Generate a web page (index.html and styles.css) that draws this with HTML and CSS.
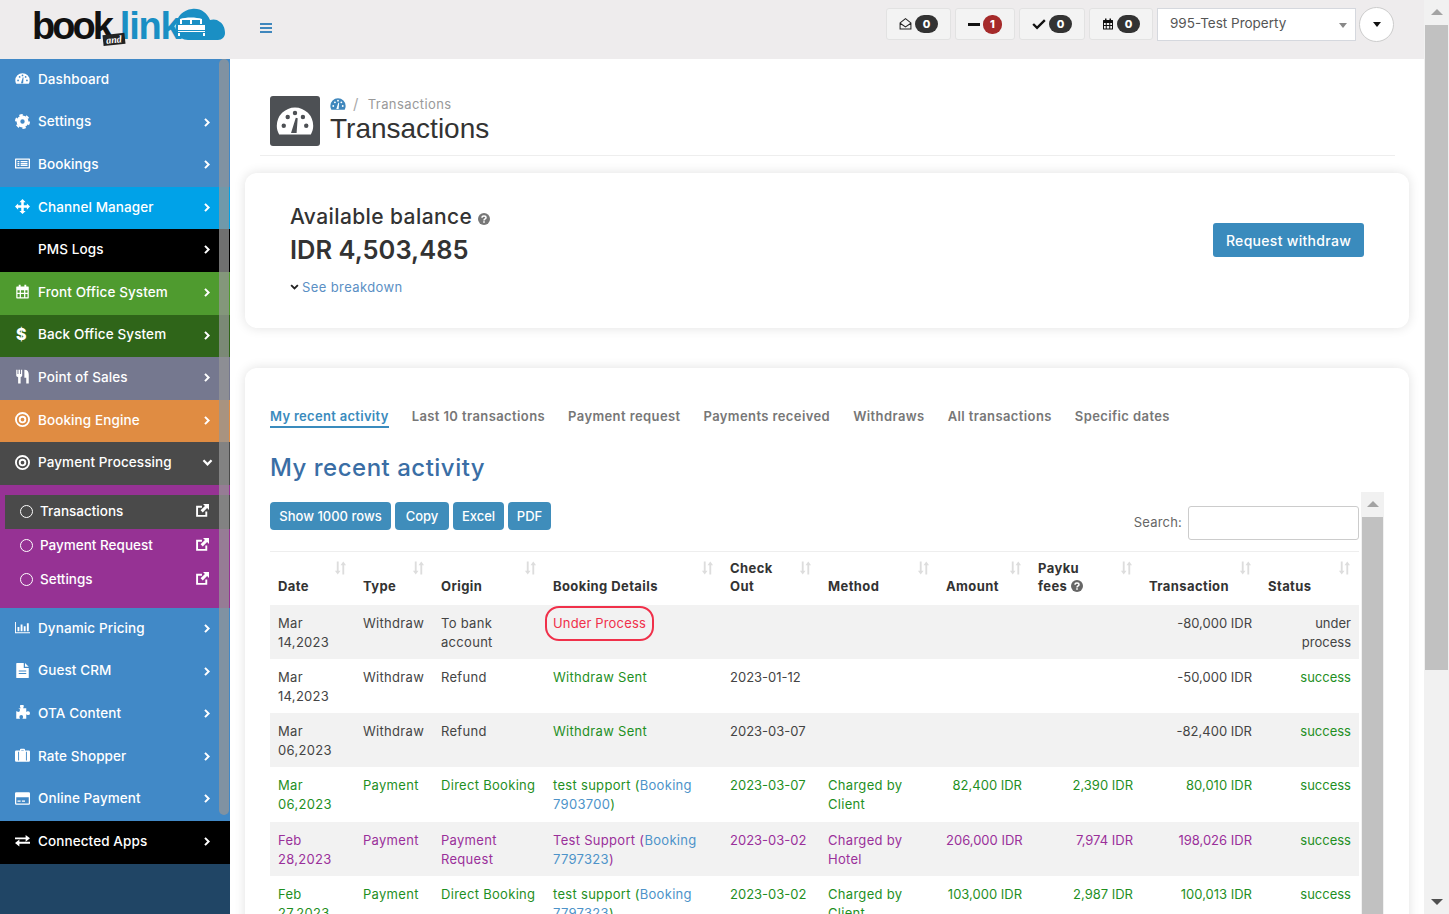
FILE: index.html
```html
<!DOCTYPE html>
<html lang="en">
<head>
  <meta charset="UTF-8">
  <meta name="viewport" content="width=device-width,initial-scale=1.0">
  <title>Transactions</title>
  <link rel="stylesheet" href="styles.css">
</head>
<body>
  <svg class="defs" width="0" height="0" aria-hidden="true">
    <symbol id="i-gauge" viewBox="0 0 24 24"><path fill="currentColor" fill-rule="evenodd" d="M12 3.5A11.5 11.5 0 0 0 .5 15c0 2 .5 3.6 1.5 5.5h20c1-1.900 1.500-3.500 1.500-5.500A11.500 11.500 0 0 0 12 3.500zM3.500 15a1.400 1.400 0 1 0 2.800 0a1.400 1.400 0 1 0-2.800 0zM6 9.500a1.400 1.400 0 1 0 2.800 0a1.400 1.400 0 1 0-2.800 0zM10.600 7a1.400 1.400 0 1 0 2.800 0a1.400 1.400 0 1 0-2.800 0zM15.600 9.500a1.400 1.400 0 1 0 2.800 0a1.400 1.400 0 1 0-2.800 0zM17.700 15a1.400 1.400 0 1 0 2.800 0a1.400 1.400 0 1 0-2.800 0zM9.500 19.500l3-9.500 1.200.3-.7 9.200z"/></symbol>
    <symbol id="i-gear" viewBox="0 0 24 24"><path fill="currentColor" fill-rule="evenodd" d="M12 2.500a9.500 9.500 0 1 0 0 19a9.500 9.500 0 1 0 0-19zM12 8.500a3.500 3.500 0 1 1 0 7a3.500 3.500 0 1 1 0-7z"/><circle cx="12" cy="12" r="10.500" fill="none" stroke="currentColor" stroke-width="3" stroke-dasharray="5.500 5.500"/></symbol>
    <symbol id="i-list" viewBox="0 0 24 24"><path fill="currentColor" fill-rule="evenodd" d="M1 4h22a1 1 0 0 1 1 1v14a1 1 0 0 1-1 1H1a1 1 0 0 1-1-1V5a1 1 0 0 1 1-1zM2 6v12h20V6zM4 8h3v2H4zM9 8h11v2H9zM4 11h3v2H4zM9 11h11v2H9zM4 14h3v2H4zM9 14h11v2H9z"/></symbol>
    <symbol id="i-move" viewBox="0 0 24 24"><path fill="currentColor" d="M12 0l5 5h-3v5h5V7l5 5-5 5v-3h-5v5h3l-5 5-5-5h3v-5H5v3l-5-5 5-5v3h5V5H7z"/></symbol>
    <symbol id="i-cal" viewBox="0 0 24 24"><path fill="currentColor" fill-rule="evenodd" d="M6 1h3v3h6V1h3v3h3a1 1 0 0 1 1 1v17a1 1 0 0 1-1 1H3a1 1 0 0 1-1-1V5a1 1 0 0 1 1-1h3zM4 10v4h3.500v-4zM9.500 10v4h5v-4zM16.500 10v4H20v-4zM4 16v5h3.500v-5zM9.500 16v5h5v-5zM16.500 16v5H20v-5z"/></symbol>
    <symbol id="i-cutlery" viewBox="0 0 24 24"><path fill="currentColor" d="M2 1h2v7h1.500V1h2.500v7h1.500V1h2v9c0 1.500-1 2.500-2.500 3v10h-4V13C3 12.500 2 11.500 2 10zM15 1c5 0 7 3 7 8v14h-4v-9h-3z"/></symbol>
    <symbol id="i-target" viewBox="0 0 24 24"><path fill="currentColor" fill-rule="evenodd" d="M12 0a12 12 0 1 0 0 24a12 12 0 1 0 0-24zM12 3a9 9 0 1 1 0 18a9 9 0 1 1 0-18zM12 6a6 6 0 1 0 0 12a6 6 0 1 0 0-12zM12 9a3 3 0 1 1 0 6a3 3 0 1 1 0-6z"/></symbol>
    <symbol id="i-bars" viewBox="0 0 24 24"><path fill="currentColor" d="M0 3h1.500v16.500H24V21H0zM4 11h3v7H4zM9 7h3v11H9zM14 10h3v8h-3zM19 5h3v13h-3z"/></symbol>
    <symbol id="i-file" viewBox="0 0 24 24"><path fill="currentColor" fill-rule="evenodd" d="M3 0h11v8h8v15a1 1 0 0 1-1 1H3a1 1 0 0 1-1-1V1a1 1 0 0 1 1-1zM16 0l6 6h-6zM6 12v1.500h12V12zM6 16v1.500h12V16z"/></symbol>
    <symbol id="i-puzzle" viewBox="0 0 24 24"><path fill="currentColor" d="M9 1a3 3 0 0 1 6 0c0 2-1 2-1 3h5v6c1 0 1.500-1 3-1a3 3 0 0 1 0 6c-1.500 0-2-1-3-1v7h-6c0-1.500 1-2 1-3a3 3 0 0 0-6 0c0 1 1 1.500 1 3H3V9c1.500 0 2 1 3 1a3 3 0 0 0 0-6H3V4h7c0-1-1-1-1-3z" transform="translate(-1 1)"/></symbol>
    <symbol id="i-case" viewBox="0 0 24 24"><path fill="currentColor" fill-rule="evenodd" d="M8 4V2.500C8 1.500 9 1 10 1h4c1 0 2 .5 2 1.500V4h6a2 2 0 0 1 2 2v14a2 2 0 0 1-2 2H2a2 2 0 0 1-2-2V6a2 2 0 0 1 2-2zM10 3v1h4V3zM5 6v14h1.500V6zM17.500 6v14H19V6z"/></symbol>
    <symbol id="i-card" viewBox="0 0 24 24"><path fill="currentColor" fill-rule="evenodd" d="M2 2h20a2 2 0 0 1 2 2v16a2 2 0 0 1-2 2H2a2 2 0 0 1-2-2V4a2 2 0 0 1 2-2zM2 10v10h20V10zM4 15h5v2H4zM11 15h5v2h-5z"/></symbol>
    <symbol id="i-swap" viewBox="0 0 24 24"><path fill="currentColor" d="M0 7h17V3l7 5.500-7 5.500v-4H0zM24 14H7v-3.500L0 16l7 5.500V17h17z"/></symbol>
    <symbol id="i-ext" viewBox="0 0 24 24"><path fill="none" stroke="currentColor" stroke-width="3.500" d="M19 14v8H2V5h9"/><path fill="currentColor" d="M13 0h11v11l-3.500-3.500-8 8-4-4 8-8z"/></symbol>
    <symbol id="i-chev" viewBox="0 0 10 12"><path fill="none" stroke="currentColor" stroke-width="2.500" d="M2.500 1.500L7 6l-4.500 4.500"/></symbol>
    <symbol id="i-down" viewBox="0 0 12 10"><path fill="none" stroke="currentColor" stroke-width="2.500" d="M1.500 2.500L6 7l4.500-4.500"/></symbol>
    <symbol id="i-help" viewBox="0 0 12 12"><circle cx="6" cy="6" r="6" fill="currentColor"/><path fill="none" stroke="#fff" stroke-width="1.500" d="M4 4.700c0-2.300 4-2.300 4 0 0 1.300-2 1.300-2 2.800"/><path fill="#fff" d="M5.200 8.300h1.600v1.500H5.200z"/></symbol>
    <symbol id="i-sort" viewBox="0 0 14 14"><path fill="currentColor" d="M3 0h2v10h2l-3 4-3-4h2zM10 0l3 4h-2v10H9V4H7z"/></symbol>
  </svg>

  <div class="app">
    <header class="topbar">
      <a class="logo">
        <span class="logo-book">book</span><span class="logo-and">and</span><span class="logo-link">link</span>
        <svg class="logo-cloud" viewBox="0 0 54 34"><path fill="#1a8fc4" d="M4 17C5 8 11 2 20 1c9-1 15 4 18 11 3-1 7-1 10 2 3 2 5 6 5 11 0 4-3 7-7 7H16C11 32 6 29 5 25 4 22 3 20 4 17z"/><path fill="#fff" d="M8 11c6-2 16-2 22 0v5H8zM6 17h27v7H6zM6 25h2v3H6zM31 25h2v3h-2z"/><path fill="#1a8fc4" d="M10 12h8v4h-8zM20 12h8v4h-8zM6 22h27v1H6z"/></svg>
      </a>
      <button class="hamburger" aria-label="Menu"><span></span><span></span><span></span></button>
      <div class="top-actions">
        <a class="top-btn b-mail"><svg class="top-icon" viewBox="0 0 18 18"><path fill="none" stroke="#222" stroke-width="1.400" d="M1.500 7.500L9 1.500l7.500 6V16h-15zM1.500 8l7.500 5 7.500-5"/></svg><b class="pill">0</b></a>
        <a class="top-btn b-minus"><span class="minus"></span><b class="pill red">1</b></a>
        <a class="top-btn b-check"><svg class="top-icon" viewBox="0 0 18 18"><path fill="none" stroke="#111" stroke-width="3" d="M1.500 9l5 5L16.500 4"/></svg><b class="pill">0</b></a>
        <a class="top-btn b-cal"><svg class="top-icon cal"><use href="#i-cal"/></svg><b class="pill">0</b></a>
        <div class="prop-select">995-Test Property<i class="caret grey"></i></div>
        <button class="round-btn" aria-label="Account"><i class="caret"></i></button>
      </div>
    </header>

    <div class="layout">
      <nav class="sidebar">
        <a class="nav-item c-blue"><svg class="nav-icon"><use href="#i-gauge"/></svg>Dashboard</a>
        <a class="nav-item c-blue"><svg class="nav-icon"><use href="#i-gear"/></svg>Settings<svg class="chev"><use href="#i-chev"/></svg></a>
        <a class="nav-item c-blue"><svg class="nav-icon"><use href="#i-list"/></svg>Bookings<svg class="chev"><use href="#i-chev"/></svg></a>
        <a class="nav-item c-sky"><svg class="nav-icon"><use href="#i-move"/></svg>Channel Manager<svg class="chev"><use href="#i-chev"/></svg></a>
        <a class="nav-item c-black"><span class="nav-icon"></span>PMS Logs<svg class="chev"><use href="#i-chev"/></svg></a>
        <a class="nav-item c-green"><svg class="nav-icon"><use href="#i-cal"/></svg>Front Office System<svg class="chev"><use href="#i-chev"/></svg></a>
        <a class="nav-item c-dgreen"><span class="nav-icon dollar">$</span>Back Office System<svg class="chev"><use href="#i-chev"/></svg></a>
        <a class="nav-item c-slate"><svg class="nav-icon"><use href="#i-cutlery"/></svg>Point of Sales<svg class="chev"><use href="#i-chev"/></svg></a>
        <a class="nav-item c-orange"><svg class="nav-icon"><use href="#i-target"/></svg>Booking Engine<svg class="chev"><use href="#i-chev"/></svg></a>
        <a class="nav-item c-dark"><svg class="nav-icon"><use href="#i-target"/></svg>Payment Processing<svg class="chev down"><use href="#i-down"/></svg></a>
        <div class="submenu">
          <a class="sub-item active"><i class="ring"></i>Transactions<svg class="ext"><use href="#i-ext"/></svg></a>
          <a class="sub-item"><i class="ring"></i>Payment Request<svg class="ext"><use href="#i-ext"/></svg></a>
          <a class="sub-item"><i class="ring"></i>Settings<svg class="ext"><use href="#i-ext"/></svg></a>
        </div>
        <a class="nav-item c-blue"><svg class="nav-icon"><use href="#i-bars"/></svg>Dynamic Pricing<svg class="chev"><use href="#i-chev"/></svg></a>
        <a class="nav-item c-blue"><svg class="nav-icon"><use href="#i-file"/></svg>Guest CRM<svg class="chev"><use href="#i-chev"/></svg></a>
        <a class="nav-item c-blue"><svg class="nav-icon"><use href="#i-puzzle"/></svg>OTA Content<svg class="chev"><use href="#i-chev"/></svg></a>
        <a class="nav-item c-blue"><svg class="nav-icon"><use href="#i-case"/></svg>Rate Shopper<svg class="chev"><use href="#i-chev"/></svg></a>
        <a class="nav-item c-blue"><svg class="nav-icon"><use href="#i-card"/></svg>Online Payment<svg class="chev"><use href="#i-chev"/></svg></a>
        <a class="nav-item c-black"><svg class="nav-icon"><use href="#i-swap"/></svg>Connected Apps<svg class="chev"><use href="#i-chev"/></svg></a>
        <div class="side-thumb"></div>
      </nav>

      <main class="content">
        <div class="page-head">
          <div class="head-icon"><svg><use href="#i-gauge"/></svg></div>
          <div>
            <div class="crumbs"><svg class="crumb-icon"><use href="#i-gauge"/></svg><span class="crumb-sep">/</span><span>Transactions</span></div>
            <h1>Transactions</h1>
          </div>
        </div>

        <section class="card balance">
          <div>
            <div class="bal-label">Available balance <svg class="help"><use href="#i-help"/></svg></div>
            <div class="bal-amount">IDR 4,503,485</div>
            <a class="bal-more"><svg class="more-icon"><use href="#i-down"/></svg>See breakdown</a>
          </div>
          <button class="btn-withdraw">Request withdraw</button>
        </section>

        <section class="card activity">
          <div class="tabs">
            <a class="tab active">My recent activity</a>
            <a class="tab">Last 10 transactions</a>
            <a class="tab">Payment request</a>
            <a class="tab">Payments received</a>
            <a class="tab">Withdraws</a>
            <a class="tab">All transactions</a>
            <a class="tab">Specific dates</a>
          </div>
          <h2>My recent activity</h2>

          <div class="dt-wrap">
            <div class="dt-main">
              <div class="dt-tools">
                <div class="dt-btns">
                  <button>Show 1000 rows</button>
                  <button>Copy</button>
                  <button>Excel</button>
                  <button>PDF</button>
                </div>
                <label class="dt-search">Search: <input type="text"></label>
              </div>
              <table class="dt">
                <colgroup>
                  <col class="w-date"><col class="w-type"><col class="w-origin"><col class="w-details"><col class="w-check">
                  <col class="w-method"><col class="w-amount"><col class="w-fees"><col class="w-trans"><col class="w-status">
                </colgroup>
                <thead>
                  <tr>
                    <th>Date<svg class="sort"><use href="#i-sort"/></svg></th>
                    <th>Type<svg class="sort"><use href="#i-sort"/></svg></th>
                    <th>Origin<svg class="sort"><use href="#i-sort"/></svg></th>
                    <th>Booking Details<svg class="sort"><use href="#i-sort"/></svg></th>
                    <th>Check<br>Out<svg class="sort"><use href="#i-sort"/></svg></th>
                    <th>Method<svg class="sort"><use href="#i-sort"/></svg></th>
                    <th>Amount<svg class="sort"><use href="#i-sort"/></svg></th>
                    <th>Payku<br>fees <svg class="help small"><use href="#i-help"/></svg><svg class="sort"><use href="#i-sort"/></svg></th>
                    <th>Transaction<svg class="sort"><use href="#i-sort"/></svg></th>
                    <th>Status<svg class="sort"><use href="#i-sort"/></svg></th>
                  </tr>
                </thead>
                <tbody>
                  <tr class="plain">
                    <td>Mar 14,2023</td><td>Withdraw</td><td>To bank account</td>
                    <td><span class="flagged">Under Process</span></td><td></td><td></td><td></td><td></td>
                    <td class="num">-80,000 IDR</td><td class="num wrap">under process</td>
                  </tr>
                  <tr class="plain">
                    <td>Mar 14,2023</td><td>Withdraw</td><td>Refund</td>
                    <td class="t-green">Withdraw Sent</td><td>2023-01-12</td><td></td><td></td><td></td>
                    <td class="num">-50,000 IDR</td><td class="num t-green">success</td>
                  </tr>
                  <tr class="plain">
                    <td>Mar 06,2023</td><td>Withdraw</td><td>Refund</td>
                    <td class="t-green">Withdraw Sent</td><td>2023-03-07</td><td></td><td></td><td></td>
                    <td class="num">-82,400 IDR</td><td class="num t-green">success</td>
                  </tr>
                  <tr class="t-green">
                    <td>Mar 06,2023</td><td>Payment</td><td>Direct Booking</td>
                    <td>test support (<a>Booking 7903700</a>)</td><td>2023-03-07</td><td>Charged by Client</td>
                    <td class="num">82,400 IDR</td><td class="num">2,390 IDR</td><td class="num">80,010 IDR</td><td class="num">success</td>
                  </tr>
                  <tr class="t-purple">
                    <td>Feb 28,2023</td><td>Payment</td><td>Payment Request</td>
                    <td>Test Support (<a>Booking 7797323</a>)</td><td>2023-03-02</td><td>Charged by Hotel</td>
                    <td class="num">206,000 IDR</td><td class="num">7,974 IDR</td><td class="num">198,026 IDR</td><td class="num t-green">success</td>
                  </tr>
                  <tr class="t-green">
                    <td>Feb 27,2023</td><td>Payment</td><td>Direct Booking</td>
                    <td>test support (<a>Booking 7797323</a>)</td><td>2023-03-02</td><td>Charged by Client</td>
                    <td class="num">103,000 IDR</td><td class="num">2,987 IDR</td><td class="num">100,013 IDR</td><td class="num">success</td>
                  </tr>
                </tbody>
              </table>
            </div>
            <div class="vscroll inner"><i class="arrow-up"></i><div class="vthumb"></div></div>
          </div>
        </section>
      </main>
    </div>
  </div>

  <div class="vscroll page"><i class="arrow-up"></i><div class="vthumb"></div><i class="arrow-down"></i></div>
</body>
</html>
```

FILE: styles.css
```css
* { box-sizing:border-box; }
html, body { height:100%; }
body { margin:0; display:flex; height:914px; overflow:hidden; background:#fff; color:#444;
       font-family:Inter,"Noto Sans",Arial,sans-serif; font-size:13px; }
.defs { position:absolute; }
a { color:inherit; text-decoration:none; }
button { font-family:inherit; cursor:pointer; }

.app { flex:1; min-width:0; display:flex; flex-direction:column; }

/* top bar */
.topbar { height:59px; flex:none; display:flex; align-items:flex-start; background:#eeeced; padding-right:30px; }
.logo { width:230px; height:59px; position:relative; display:block; padding:4px 0 0 32px; white-space:nowrap;
        font-family:"Liberation Sans",Arial,sans-serif; font-size:38px; line-height:44px; letter-spacing:-3px; }
.logo-book { color:#111; font-weight:bold; }
.logo-link { color:#1a8fc4; margin-left:9px; font-weight:bold; letter-spacing:-1.200px; }
.logo-and { position:absolute; left:103px; top:34px; background:#222; color:#fff; font:italic bold 10px/11px "Liberation Serif",serif;
            letter-spacing:0; padding:0 3px; transform:rotate(-6deg); z-index:1; }
.logo-cloud { position:absolute; left:172px; top:8px; width:54px; height:34px; }
.hamburger { margin:23px 0 0 30px; width:12px; padding:0; border:none; background:none; display:flex; flex-direction:column; gap:2px; }
.hamburger span { height:2px; background:#3f87bd; }
.top-actions { margin-left:auto; margin-top:8px; display:flex; gap:4px; }
.top-btn { height:32px; display:flex; align-items:center; justify-content:center; gap:3px; padding:0 12px;
           background:#f3f3f3; border:1px solid #e2e2e2; border-radius:3px; }
.top-icon { width:16px; height:16px; }
.top-icon.cal { color:#111; width:14px; height:14px; }
.b-mail { width:65px; }
.b-minus { width:60px; }
.b-check { width:66px; }
.b-cal { width:64px; }
.minus { width:13px; height:3px; background:#111; }
.pill { min-width:23px; height:18px; border-radius:9px; background:#333; color:#fff; font-size:11px; font-weight:800; line-height:18px; text-align:center; }
.pill.red { min-width:19px; height:19px; line-height:19px; background:#a52a2a; }
.prop-select { width:199px; height:33px; margin-right:-1px; background:#fff; border:1px solid #d5d8de; padding-left:12px; line-height:29px; color:#555;
               font-size:13.5px; position:relative; }
.caret { display:inline-block; width:0; height:0; border:4.500px solid transparent; border-top:5px solid #111; border-bottom:0; }
.caret.grey { position:absolute; right:8px; top:14px; border-top-color:#888; }
.round-btn { width:35px; height:35px; margin-top:-1px; border-radius:50%; background:#fff; border:1px solid #ccc; padding:0;
             display:flex; align-items:center; justify-content:center; }

/* sidebar */
.layout { flex:1; min-height:0; display:flex; }
.sidebar { width:230px; flex:none; position:relative; background:#204565; color:#fff; font-size:13.500px; font-weight:500; }
.nav-item { height:42.600px; display:flex; align-items:center; padding:0 20px 3px 15px; position:relative; letter-spacing:.1px; }
.nav-icon { width:15px; height:15px; margin-right:8px; flex:none; color:#fff; }
.dollar { font-weight:800; font-size:16px; line-height:15px; padding-left:1px; }
.chev { position:absolute; left:203px; top:15px; width:8px; height:11px; }
.chev.down { left:202px; top:16px; width:11px; height:9px; }
.c-blue { background:#4189c7; }
.c-sky { background:#00a2e8; }
.c-black { background:#000; }
.c-green { background:#4f9b2f; }
.c-dgreen { background:#2f6519; }
.c-slate { background:#75788f; }
.c-orange { background:#e08c42; }
.c-dark { background:#4a4a4a; }
.submenu { background:#963294; padding:10px 0 11px 5px; }
.sub-item { height:34px; display:flex; align-items:center; padding:0 0 1px 15px; position:relative; }
.sub-item.active { background:#4a4a4a; }
.ring { width:13px; height:13px; margin-right:7px; border:1.500px solid #fff; border-radius:50%; flex:none; }
.ext { position:absolute; left:191px; top:9px; width:13px; height:13px; }
.side-thumb { position:absolute; left:219px; top:0; width:10px; height:756px; border-radius:5px; background:rgba(150,150,150,.75); }

/* main */
.content { flex:1; min-width:0; overflow:hidden; background:#fff; }
.page-head { margin:0 29px 17px 30px; padding:37px 10px 9px; display:flex; gap:10px; border-bottom:1px solid #eee; }
.head-icon { width:50px; height:50px; background:#4d5054; border-radius:3px; color:#fff; display:flex; align-items:center; justify-content:center; }
.head-icon svg { width:38px; height:38px; }
.crumbs { display:flex; align-items:center; color:#999; line-height:16px; letter-spacing:.4px; margin-bottom:1px; }
.crumb-icon { width:16px; height:16px; color:#3f87bd; }
.crumb-sep { margin:0 9px 0 7px; color:#aaa; font-size:15px; }
h1 { margin:0; font-family:"Liberation Sans",Arial,sans-serif; font-size:28px; font-weight:400; line-height:31px; color:#333; }

.card { margin:0 15px; background:#fff; border-radius:12px; box-shadow:0 0 12px rgba(0,0,0,.12); }
.balance { height:155px; display:flex; justify-content:space-between; padding:32px 45px 0; }
.bal-label { font-size:21px; line-height:24px; letter-spacing:.4px; color:#333; font-weight:500; }
.help { width:12px; height:12px; color:#777; vertical-align:-1px; }
.help.small { color:#666; }
.bal-amount { font-size:25.500px; line-height:34px; margin-top:4px; font-weight:600; color:#333; }
.bal-more { display:flex; align-items:center; margin-top:11px; line-height:18px; letter-spacing:.4px; color:#5b8fc4; }
.more-icon { width:9px; height:8px; margin-right:3px; color:#222; }
.btn-withdraw { align-self:flex-start; margin-top:18px; width:151px; height:34px; border:none; border-radius:3px; background:#3a8bbd;
                color:#fff; font-size:14px; font-weight:500; letter-spacing:.3px; }

.activity { margin-top:40px; height:700px; padding:38px 25px 0; }
.tabs { display:flex; gap:23px; }
.tab { font-weight:600; color:#777; line-height:20px; padding-bottom:2px; letter-spacing:.4px; }
.tab.active { color:#3a8bbd; border-bottom:2px solid #3a8bbd; padding-bottom:0; letter-spacing:.3px; }
h2 { margin:23px 0 7px; font-size:24px; line-height:34px; font-weight:500; letter-spacing:.5px; color:#3a6ea5; }

.dt-wrap { display:flex; gap:2px; }
.dt-main { width:1089px; }
.dt-tools { height:59px; display:flex; justify-content:space-between; }
.dt-btns { display:flex; gap:4px; padding-top:10px; }
.dt-btns button { height:28px; padding:0; border:none; border-radius:4px; background:#3f8dbb; color:#fff; font-size:13px; font-weight:500; width:51px; }
.dt-btns button:nth-child(1) { width:121px; }
.dt-btns button:nth-child(2) { width:54px; }
.dt-btns button:nth-child(4) { width:43px; }
.dt-search { color:#666; display:flex; align-items:flex-start; gap:6px; padding-top:14px; line-height:32px; letter-spacing:.2px; }
.dt-search input { width:171px; height:34px; border:1px solid #ccc; border-radius:3px; background:#fff; }

.dt { width:100%; table-layout:fixed; border-collapse:collapse; border-top:1px solid #eee; line-height:19px; }
.w-date { width:85px; }
.w-type { width:78px; }
.w-origin { width:112px; }
.w-details { width:177px; }
.w-check { width:98px; }
.w-method { width:118px; }
.w-amount { width:92px; }
.w-fees { width:111px; }
.w-trans { width:119px; }
.w-status { width:99px; }
.dt th { position:relative; text-align:left; vertical-align:bottom; padding:6px 8px 10px; line-height:18px; font-weight:700; color:#333; height:53px; letter-spacing:.4px; }
.sort { position:absolute; right:8px; top:9px; width:13px; height:14px; color:#ddd; }
.dt td { padding:9px 8px 7.300px; vertical-align:top; letter-spacing:.3px; }
.dt td:nth-child(5) { letter-spacing:0; }
.dt tbody tr { height:54.300px; }
.dt tbody tr:nth-child(odd) { background:#f2f2f2; }
.dt .num { text-align:right; white-space:nowrap; letter-spacing:0; }
.dt .wrap { white-space:normal; }
.plain { color:#444; }
.t-green, .dt .t-green { color:#1f8f1f; }
.t-purple { color:#9a309a; }
.dt td a { color:#4d93c9; }
.flagged { display:inline-block; color:#f0304a; border-radius:6px; outline:2px solid #f0304a; outline-offset:6px; line-height:19px; letter-spacing:.15px; }

/* scrollbars drawn by hand so they match */
.vscroll { position:relative; flex:none; background:#f1f1f1; }
.vscroll.inner { width:23px; height:460px; }
.vscroll.inner .vthumb { position:absolute; left:1px; right:1px; top:25px; bottom:0; background:#c1c1c1; }
.vscroll.page { width:25px; height:914px; }
.vscroll.page .vthumb { position:absolute; left:1px; right:1px; top:25px; height:645px; background:#c1c1c1; }
.arrow-up, .arrow-down { position:absolute; left:50%; margin-left:-6px; width:0; height:0; border:6px solid transparent; }
.arrow-up { top:9px; border-top:0; border-bottom:6px solid #a3a3a3; }
.arrow-down { bottom:9px; border-bottom:0; border-top:6px solid #505050; }
```
